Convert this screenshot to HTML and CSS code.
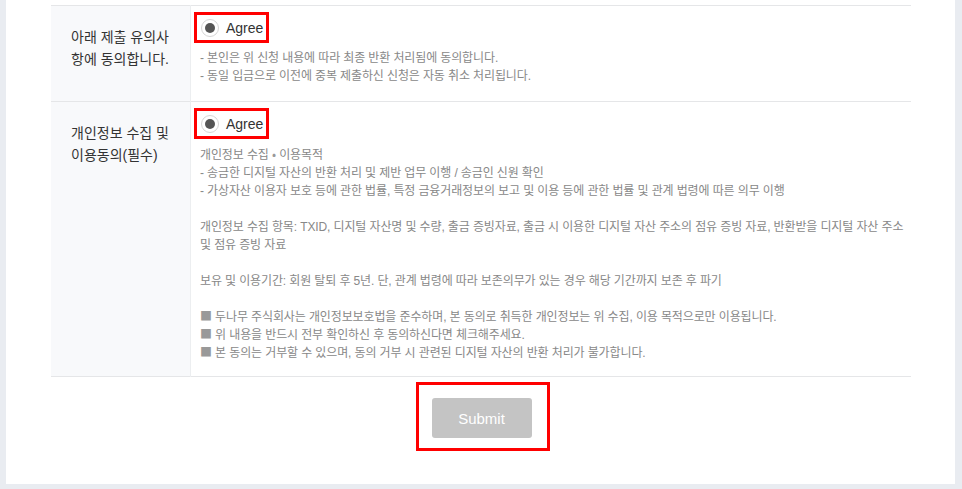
FILE: index.html
```html
<html>
  <head>
    <meta charset="utf-8">
    <link rel="stylesheet" href="styles.css">
  </head>
  <body>
    <div class="card">
      <table class="terms">
        <tr>
          <th>아래 제출 유의사<br>항에 동의합니다.</th>
          <td>
            <label class="agree"><span class="radio"></span>Agree</label>
            <div class="desc">
              - 본인은 위 신청 내용에 따라 최종 반환 처리됨에 동의합니다.<br>
              - 동일 입금으로 이전에 중복 제출하신 신청은 자동 취소 처리됩니다.
            </div>
          </td>
        </tr>
        <tr>
          <th>개인정보 수집 및<br>이용동의(필수)</th>
          <td>
            <label class="agree"><span class="radio"></span>Agree</label>
            <div class="desc long">
              개인정보 수집 <span class="sym">•</span> 이용목적<br>
              - 송금한 디지털 자산의 반환 처리 및 제반 업무 이행 / 송금인 신원 확인<br>
              - 가상자산 이용자 보호 등에 관한 법률, 특정 금융거래정보의 보고 및 이용 등에 관한 법률 및 관계 법령에 따른 의무 이행<br>
              <br>
              개인정보 수집 항목: TXID, 디지털 자산명 및 수량, 출금 증빙자료, 출금 시 이용한 디지털 자산 주소의 점유 증빙 자료, 반환받을 디지털 자산 주소 및 점유 증빙 자료<br>
              <br>
              보유 및 이용기간: 회원 탈퇴 후 5년. 단, 관계 법령에 따라 보존의무가 있는 경우 해당 기간까지 보존 후 파기<br>
              <br>
              <span class="sym">■</span> 두나무 주식회사는 개인정보보호법을 준수하며, 본 동의로 취득한 개인정보는 위 수집, 이용 목적으로만 이용됩니다.<br>
              <span class="sym">■</span> 위 내용을 반드시 전부 확인하신 후 동의하신다면 체크해주세요.<br>
              <span class="sym">■</span> 본 동의는 거부할 수 있으며, 동의 거부 시 관련된 디지털 자산의 반환 처리가 불가합니다.
            </div>
          </td>
        </tr>
      </table>
      <div class="actions">
        <div class="submit-wrap">
          <button class="submit" disabled>Submit</button>
        </div>
      </div>
    </div>
  </body>
</html>
```

FILE: styles.css
```css
body {
  margin: 0;
  background: #e9ecf1;
  font-family: "Liberation Sans", "Noto Sans CJK KR", sans-serif;
}

.card {
  background: #fff;
  margin: 0 7px 0 6px;
  padding: 5px 44px 33px 45px;
}

.terms {
  width: 100%;
  border-collapse: collapse;
  border-top: 1px solid #e5e6e8;
}

.terms tr {
  border-bottom: 1px solid #e5e6e8;
}

.terms th {
  width: 119px;
  background: #f8f9fb;
  border-right: 1px solid #eceef0;
  color: #333;
  font-size: 14px;
  font-weight: normal;
  line-height: 22px;
  text-align: left;
  vertical-align: top;
  padding: 20px 0 0 20px;
}

.terms td {
  vertical-align: top;
  padding: 6px 4px 16px 3px;
}

.agree {
  display: inline-flex;
  align-items: center;
  height: 25px;
  padding: 0 3px 0 4px;
  border: 3px solid #f00;
  color: #333;
  font-size: 14px;
}

.radio {
  box-sizing: border-box;
  width: 18px;
  height: 18px;
  border: 1px solid #d6d6d6;
  border-radius: 50%;
  background: #fff;
  margin-right: 7px;
  display: flex;
  align-items: center;
  justify-content: center;
}

.radio::after {
  content: "";
  width: 10px;
  height: 10px;
  border-radius: 50%;
  background: #555;
}

.desc {
  margin: 6px 0 0 6px;
  color: #888;
  font-size: 12px;
  line-height: 18px;
  letter-spacing: -0.12px;
}

.desc.long {
  margin-top: 7px;
  margin-bottom: -2px;
}

.sym {
  font-family: "Noto Sans CJK KR", sans-serif;
  line-height: 0;
  color: #999;
}

.actions {
  display: flex;
  justify-content: center;
  padding-top: 5px;
}

.submit-wrap {
  border: 3px solid #f00;
  padding: 13px 15px 10px 13px;
  margin-left: 3px;
}

.submit {
  width: 100px;
  height: 40px;
  border: 0;
  border-radius: 3px;
  background: #c4c4c4;
  color: #fff;
  font-family: "Liberation Sans", sans-serif;
  font-size: 15px;
}
```
